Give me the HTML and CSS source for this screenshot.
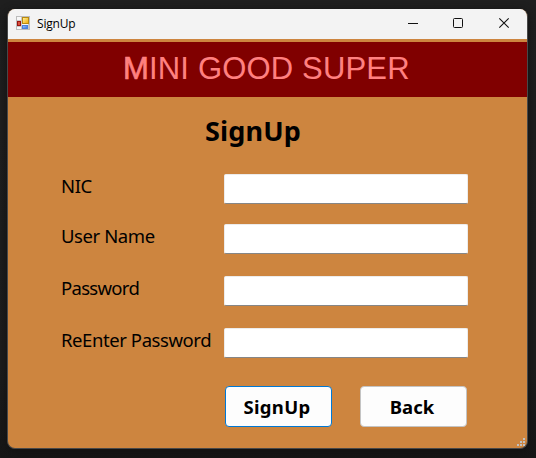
FILE: index.html
```html
<!DOCTYPE html>
<html lang="en">
<head>
<meta charset="utf-8">
<title>SignUp</title>
<link rel="stylesheet" href="styles.css">
</head>
<body>
<main class="window">
  <header class="titlebar">
    <svg class="app-icon" width="14" height="14" viewBox="0 0 14 14" shape-rendering="crispEdges">
      <defs>
        <linearGradient id="gold" x2="1" y2="1"><stop stop-color="#fff3a0"/><stop offset="1" stop-color="#f0a800"/></linearGradient>
        <linearGradient id="blue" x2="1" y2="1"><stop stop-color="#a8ccff"/><stop offset="1" stop-color="#286ad8"/></linearGradient>
      </defs>
      <rect x=".5" y=".5" width="13" height="13" fill="#f7f7f7" stroke="#bcbcbc"/>
      <path d="M5.5 1v12M1 4.5h5M1 10.5h12M12.500 8v5" stroke="#c8c8c8" fill="none"/>
      <rect x="6.5" y="1.5" width="6" height="6" fill="url(#gold)" stroke="#b98a10"/>
      <rect x="1.5" y="5.5" width="3" height="4" fill="#d8503c" stroke="#991410"/>
      <rect x="6.500" y="9.5" width="5" height="3" fill="url(#blue)" stroke="#4a80dc"/>
    </svg>
    <span class="caption">SignUp</span>
    <svg class="controls" width="103" height="12" viewBox="0 0 103 12" fill="none" stroke="#111">
      <path d="M0 6.5h10"/>
      <rect x="45.5" y="1.5" width="9" height="9" rx="1"/>
      <path d="M91.3 1.3l9.4 9.4M100.7 1.3l-9.4 9.4" stroke-width="1.1"/>
    </svg>
  </header>
  <div class="banner"><span class="initial">M</span>INI GOOD SUPER</div>
  <h1 class="heading">SignUp</h1>
  <form class="form">
    <label class="name" for="nic">NIC</label><input class="field" id="nic">
    <label class="name" for="user">User Name</label><input class="field" id="user">
    <label class="name tight" for="pass">Password</label><input class="field" id="pass">
    <label class="name" for="again">ReEnter Password</label><input class="field" id="again">
  </form>
  <div class="actions">
    <button class="button primary">SignUp</button>
    <button class="button">Back</button>
  </div>
  <svg class="grip" width="8" height="8" viewBox="0 0 8 8" fill="#c0c0c0" shape-rendering="crispEdges">
    <path d="M6 0h2v2h-2zM3 3h2v2h-2zM6 3h2v2h-2zM0 6h2v2h-2zM3 6h2v2h-2zM6 6h2v2h-2z"/>
  </svg>
</main>
</body>
</html>
```
FILE: styles.css
```css
* { box-sizing: border-box; }
body {
  margin: 0;
  height: 458px;
  padding: 9px 8px 9px 7px;
  overflow: hidden;
  background: linear-gradient(#1f1f1f, #1c1c1c 80%, #161616);
  font-family: "Noto Sans", sans-serif;
  color: #000;
}
.window {
  position: relative;
  width: 521px;
  height: 440px;
  border: 1px solid #484848;
  border-top-width: 0;
  border-radius: 8px;
  background: #cd853f;
  overflow: hidden;
  box-shadow: 0 2px 8px #111;
}
.titlebar {
  display: flex;
  align-items: center;
  height: 30px;
  padding: 0 16px 0 8px;
  background: #f3f3f3;
}
.app-icon { margin-top: -2px; }
.caption {
  margin: -1px 0 0 7px;
  font: 12px/16px "Open Sans", sans-serif;
  letter-spacing: -0.2px;
}
.controls { margin: -3px 0 0 auto; }
.banner {
  height: 55px;
  margin-top: 3px;
  padding-left: 115px;
  background: #800000;
  color: #ff8080;
  font: 31px/53px "Liberation Sans", sans-serif;
  letter-spacing: 0.17px;
  white-space: nowrap;
}
.initial { -webkit-text-stroke: 0.7px #ff8080; }
.heading {
  margin: 15px 0 0 197px;
  font-size: 27px;
  line-height: 37px;
  font-weight: 700;
  letter-spacing: 0.15px;
}
.form {
  display: grid;
  grid-template-columns: 163px 244px;
  grid-template-rows: 50px 52px 52px 30px;
  margin: 25px 0 0 53px;
}
.name {
  font-size: 18.5px;
  line-height: 24px;
  letter-spacing: -0.42px;
  white-space: nowrap;
}
.tight { letter-spacing: -0.7px; }
.field {
  width: 244px;
  height: 30px;
  padding: 2px 6px;
  border: 1px solid #ececec;
  border-bottom-color: #868686;
  border-radius: 2px;
  background: #fff;
  outline: none;
  font: inherit;
}
.actions { display: flex; gap: 28px; margin: 28px 0 0 217px; }
.button {
  width: 107px;
  height: 41px;
  padding: 0 3px 0 0;
  border: 1px solid #c4c4c4;
  border-radius: 4px;
  background: #fdfdfd;
  color: #000;
  font: 700 18.5px/38px "Noto Sans", sans-serif;
}
.primary { border-color: #0078d4; letter-spacing: 0.3px; }
.grip { position: absolute; right: 2px; bottom: 2px; }
```
